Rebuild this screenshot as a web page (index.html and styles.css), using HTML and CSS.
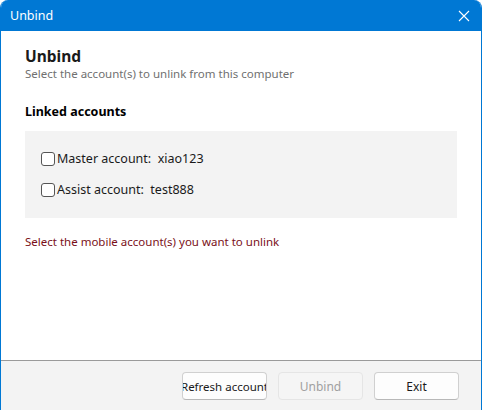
FILE: index.html
```html
<!DOCTYPE html>
<html>
<head>
<meta charset="utf-8">
<link rel="stylesheet" href="styles.css">
</head>
<body>
<div class="window">
  <div class="titlebar">
    <span class="title">Unbind</span>
    <svg class="close" width="12" height="12" viewBox="0 0 12 12"><path d="M1 1L11 11M11 1L1 11" stroke="#fff" stroke-width="1.1" fill="none"/></svg>
  </div>
  <div class="content">
    <h1 class="heading">Unbind</h1>
    <p class="subtitle">Select the account(s) to unlink from this computer</p>
    <h2 class="section">Linked accounts</h2>
    <div class="accounts">
      <label class="row"><span class="check"></span><span>Master account:&nbsp; xiao123</span></label>
      <label class="row"><span class="check"></span><span>Assist account:&nbsp; test888</span></label>
    </div>
    <p class="hint">Select the mobile account(s) you want to unlink</p>
  </div>
  <div class="footer">
    <button class="btn btn-refresh">Refresh account</button>
    <button class="btn btn-disabled">Unbind</button>
    <button class="btn">Exit</button>
  </div>
</div>
</body>
</html>
```
FILE: styles.css
```css
html, body {
  margin: 0;
  padding: 0;
  background: #ffffff;
}
body {
  font-family: "Noto Sans", "Open Sans", sans-serif;
  width: 482px;
  height: 410px;
  overflow: hidden;
}
.window {
  width: 482px;
  height: 410px;
  box-sizing: border-box;
  border-left: 1px solid #0078d4;
  border-right: 1px solid #0078d4;
  border-radius: 8px 8px 0 0;
  display: flex;
  flex-direction: column;
  overflow: hidden;
}
.titlebar {
  height: 31px;
  background: #0078d4;
  display: flex;
  align-items: center;
  justify-content: space-between;
  padding: 0 11px 0 9px;
  flex: none;
}
.title {
  color: #fff;
  font-size: 12.5px;
}
.close {
  display: block;
}
.content {
  flex: 1;
  padding: 14px 24px 0 24px;
}
.heading {
  margin: 0;
  font-size: 15.5px;
  font-weight: 700;
  color: #1a1a1a;
  line-height: 22px;
}
.subtitle {
  margin: 0;
  font-size: 11.5px;
  color: #707070;
  line-height: 14px;
}
.section {
  margin: 22px 0 0 0;
  font-size: 12.5px;
  font-weight: 700;
  color: #000;
  line-height: 18px;
}
.accounts {
  margin-top: 10px;
  background: #f3f3f3;
  height: 87px;
  box-sizing: border-box;
  padding: 19px 16px 0 16px;
  display: flex;
  flex-direction: column;
  gap: 13px;
}
.row {
  display: flex;
  align-items: center;
  font-size: 12.5px;
  color: #1a1a1a;
  line-height: 18px;
}
.check {
  border: 1px solid #555;
  border-radius: 3px;
  background: #fff;
  margin-right: 2px;
  box-sizing: border-box;
  width: 14px;
  height: 14px;
}
.hint {
  margin: 16px 0 0 0;
  font-size: 11.5px;
  color: #7a1018;
  line-height: 16px;
}
.footer {
  flex: none;
  height: 50px;
  border-top: 1px solid #9a9a9a;
  background: #f3f3f3;
  display: flex;
  justify-content: flex-end;
  align-items: flex-start;
  gap: 11px;
  padding: 11px 22px 0 0;
  box-sizing: border-box;
}
.btn {
  flex: none;
  width: 85px;
  height: 28px;
  border: 1px solid #d0d0d0;
  border-bottom-color: #b8b8b8;
  border-radius: 4px;
  background: #fdfdfd;
  font-family: "Noto Sans", "Open Sans", sans-serif;
  font-size: 12px;
  color: #1a1a1a;
  padding: 0;
  white-space: nowrap;
  overflow: hidden;
  display: flex;
  align-items: center;
  justify-content: center;
}
.btn-refresh {
  font-size: 11.5px;
}
.btn-disabled {
  background: #f5f5f5;
  border-color: #e5e5e5;
  color: #a0a0a0;
}
```
